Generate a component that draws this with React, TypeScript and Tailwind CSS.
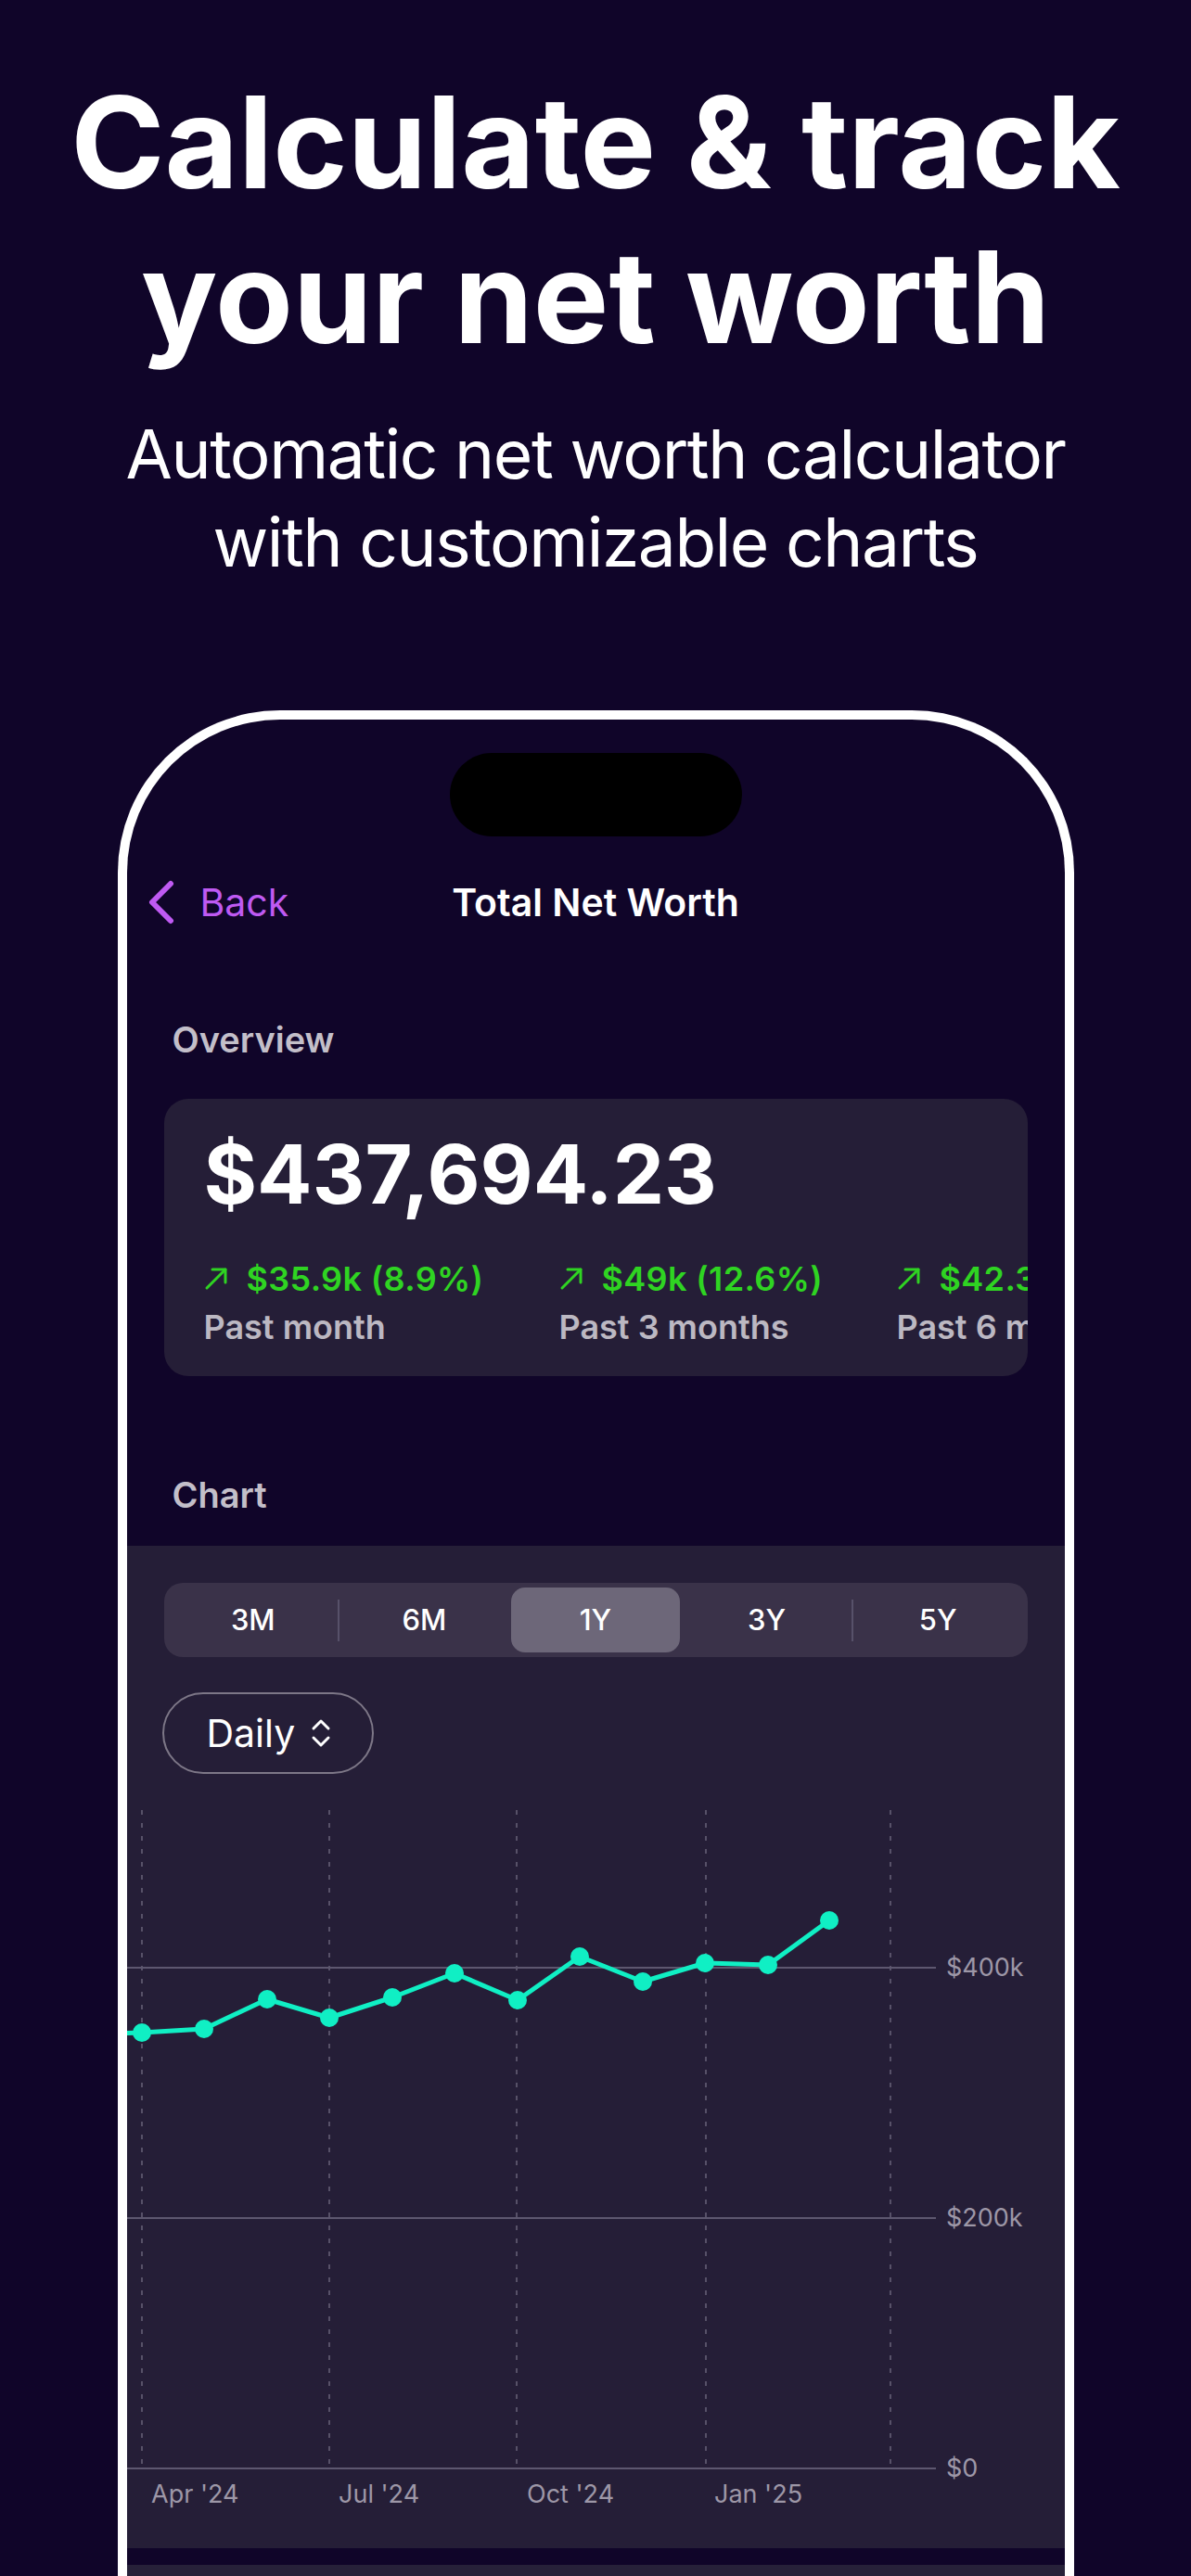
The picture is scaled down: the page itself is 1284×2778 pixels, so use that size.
import React from "react"

const points: [number, number][] = [
  [-51, 242],
  [16, 240],
  [83, 236],
  [151, 204],
  [218, 224],
  [286, 202],
  [353, 176],
  [421, 205],
  [488, 158],
  [556, 185],
  [623, 165],
  [691, 167],
  [757, 119],
]

const gridX = [16, 218, 420, 624, 823]
const gridY = [
  { y: 170, label: "$400k" },
  { y: 440, label: "$200k" },
  { y: 710, label: "$0" },
]
const months = [
  { x: 26, label: "Apr '24" },
  { x: 228, label: "Jul '24" },
  { x: 431, label: "Oct '24" },
  { x: 633, label: "Jan '25" },
]

const changes = [
  { value: "$35.9k (8.9%)", label: "Past month", width: "w-[303px]" },
  { value: "$49k (12.6%)", label: "Past 3 months", width: "w-[284px]" },
  { value: "$42.3k (10.7%)", label: "Past 6 months", width: "w-[340px]" },
]

const ranges = ["3M", "6M", "1Y", "3Y", "5Y"]

function ArrowUpRight() {
  return (
    <svg width="26" height="26" viewBox="0 0 26 26" fill="none" stroke="currentColor" strokeWidth="3" strokeLinecap="round" strokeLinejoin="round" className="shrink-0">
      <path d="M3 23 23 3" />
      <path d="M9 3h14v14" />
    </svg>
  )
}

function Chart() {
  const line = points.map(([x, y]) => `${x},${y}`).join(" ")
  return (
    <svg width="1011" height="796" className="block" fontFamily="Inter, sans-serif">
      {gridX.map((x) => (
        <line key={x} x1={x} x2={x} y1={0} y2={710} stroke="#575168" strokeWidth="2" strokeDasharray="5 9" />
      ))}
      {gridY.map((g) => (
        <g key={g.label}>
          <line x1={0} x2={872} y1={g.y} y2={g.y} stroke="#5d576f" strokeWidth="2" />
          <text x={883} y={g.y + 9} fontSize="27" fill="#9d97a7">
            {g.label}
          </text>
        </g>
      ))}
      {months.map((m) => (
        <text key={m.label} x={m.x} y={747} fontSize="27" fill="#9d97a7">
          {m.label}
        </text>
      ))}
      <polyline points={line} fill="none" stroke="#10efc4" strokeWidth="5" strokeLinejoin="round" />
      {points.map(([x, y]) => (
        <circle key={x} cx={x} cy={y} r="10" fill="#10efc4" />
      ))}
    </svg>
  )
}

export default function App() {
  return (
    <div className="h-[2778px] w-[1284px] overflow-hidden bg-[#100529] font-['Inter',sans-serif] text-white">
      <h1 className="pt-[70px] text-center text-[137px] font-bold leading-[167px]">
        Calculate &amp; track
        <br />
        your net worth
      </h1>
      <p className="mt-[38px] text-center text-[73px] leading-[95px] tracking-[-0.02em]">
        Automatic net worth calculator
        <br />
        with customizable charts
      </p>

      <div className="mx-auto mt-[134px] w-[1031px] overflow-hidden rounded-t-[175px] border-x-[10px] border-t-[10px] border-white">
        <div className="mx-auto mt-[36px] h-[90px] w-[315px] rounded-full bg-black" />

        {/* nav bar */}
        <div className="mt-[41px] grid h-[60px] grid-cols-[1fr_auto_1fr] items-center">
          <div className="flex items-center gap-[27px] pl-[22px] text-[#bf5af2]">
            <svg width="30" height="48" viewBox="0 0 30 48" fill="none" stroke="currentColor" strokeWidth="6" strokeLinecap="round" strokeLinejoin="round">
              <path d="M25 4 5 24l20 20" />
            </svg>
            <span className="text-[41px] leading-none">Back</span>
          </div>
          <div className="text-[41px] font-semibold leading-none">Total Net Worth</div>
          <div />
        </div>

        <h2 className="mt-[95px] pl-[49px] text-[38px] font-semibold leading-[46px] text-[#c3bfc9]">Overview</h2>

        <div className="mx-[40px] mt-[41px] h-[299px] overflow-hidden rounded-[26px] bg-[#251e37] pl-[43px] pt-[37px]">
          <div className="text-[88px] font-bold leading-[88px]">$437,694.23</div>
          <div className="mt-[49px] flex gap-[80px]">
            {changes.map((c) => (
              <div key={c.label} className={`${c.width} shrink-0`}>
                <div className="flex items-center gap-[20px] text-[36px] font-semibold leading-[40px] tracking-[0.01em] text-[#2fd422]">
                  <ArrowUpRight />
                  <span className="whitespace-nowrap">{c.value}</span>
                </div>
                <div className="mt-[12px] whitespace-nowrap text-[36px] font-semibold leading-[40px] text-[#bcb8c2]">{c.label}</div>
              </div>
            ))}
          </div>
        </div>

        <h2 className="mt-[105px] pl-[49px] text-[38px] font-semibold leading-[46px] text-[#c3bfc9]">Chart</h2>

        <div className="mt-[32px] bg-[#251e37] pt-[40px]">
          <div className="mx-[40px] flex h-[80px] items-stretch rounded-[20px] bg-[#3a3249] p-[5px]">
            {ranges.map((r, i) => (
              <React.Fragment key={r}>
                {i > 0 && (
                  <div className={`h-[45px] w-[2px] self-center ${i === 1 || i === 4 ? "bg-[#57516a]" : "bg-transparent"}`} />
                )}
                <div
                  className={`flex flex-1 items-center justify-center rounded-[15px] text-[31px] font-medium ${
                    r === "1Y" ? "bg-[#6d6779]" : ""
                  }`}
                >
                  {r}
                </div>
              </React.Fragment>
            ))}
          </div>

          <div className="ml-[38px] mt-[38px] flex h-[88px] w-[228px] items-center gap-[16px] rounded-full border-2 border-[#7d7787] pl-[46px]">
            <span className="text-[41px] leading-none">Daily</span>
            <svg width="24" height="32" viewBox="0 0 24 32" fill="none" stroke="currentColor" strokeWidth="3" strokeLinecap="round" strokeLinejoin="round">
              <path d="M4 11l8-8 8 8" />
              <path d="M4 21l8 8 8-8" />
            </svg>
          </div>

          <div className="mt-[39px]">
            <Chart />
          </div>
        </div>

        <div className="h-[18px]" />
        <div className="h-[200px] bg-[#272139]" />
      </div>
    </div>
  )
}
